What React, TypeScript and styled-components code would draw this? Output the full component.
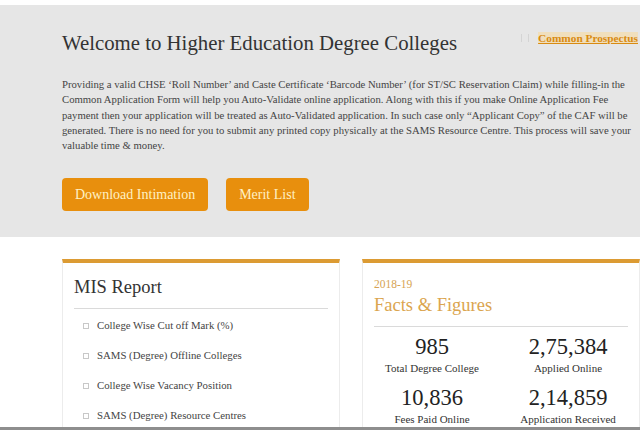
import React from 'react';
import styled, { createGlobalStyle } from 'styled-components';

const GlobalStyle = createGlobalStyle`
  html, body {
    margin: 0;
    padding: 0;
    background: #ffffff;
    overflow: hidden;
  }
  body {
    font-family: "Liberation Serif", "Times New Roman", serif;
    color: #333;
  }
`;

const Page = styled.div`
  width: 640px;
  height: 430px;
  padding-top: 5px;
  box-sizing: border-box;
  overflow: hidden;
`;

const Banner = styled.section`
  background: #e6e6e6;
  padding: 25px 0 26px 62px;
`;

const TitleRow = styled.div`
  display: flex;
  align-items: flex-start;
  justify-content: space-between;
`;

const Title = styled.h1`
  margin: 0;
  font-size: 20.8px;
  font-weight: normal;
  color: #333;
  line-height: 26px;
`;

const ProspectusLink = styled.a`
  display: flex;
  align-items: center;
  gap: 9px;
  margin-top: 2px;
  margin-right: 2px;
  font-size: 11.3px;
  font-weight: bold;
  color: #d98b12;
  text-decoration: underline;
  white-space: nowrap;
  span {
    background: #f0dfbd;
  }
`;

const DocGlyph = styled.i`
  display: inline-block;
  width: 6px;
  height: 8px;
  border-left: 1px solid #d4d4d4;
  border-right: 1px solid #d4d4d4;
`;

const Intro = styled.p`
  margin: 21px 0 0;
  width: 578px;
  font-size: 10.7px;
  line-height: 15.3px;
  color: #444;
`;

const Actions = styled.div`
  display: flex;
  gap: 18px;
  margin-top: 25px;
`;

const OrangeButton = styled.button`
  height: 33px;
  padding: 0 13px;
  border: none;
  border-radius: 4px;
  background: #e88f0d;
  color: #fff1c4;
  font-family: "Liberation Serif", "Times New Roman", serif;
  font-size: 14px;
  cursor: pointer;
`;

const Cards = styled.div`
  display: flex;
  gap: 22px;
  padding: 22px 0 0 62px;
`;

const Card = styled.div`
  width: 278px;
  flex-shrink: 0;
  box-sizing: border-box;
  border-top: 4px solid #dc9b33;
  border-left: 1px solid #ececec;
  border-right: 1px solid #ececec;
  padding: 0 11px;
  height: 200px;
`;

const CardTitle = styled.h2<{ $accent?: boolean }>`
  margin: ${(p) => (p.$accent ? '2px 0 0' : '12px 0 0')};
  font-size: 18.5px;
  font-weight: normal;
  line-height: 24px;
  color: ${(p) => (p.$accent ? '#dba54f' : '#333')};
`;

const Season = styled.div`
  margin-top: 14px;
  font-size: 11.5px;
  line-height: 14px;
  color: #d6a353;
`;

const Divider = styled.hr`
  margin: 9px 0 0;
  border: none;
  border-top: 1px solid #dadada;
`;

const ReportList = styled.ul`
  list-style: none;
  margin: 1px 0 0;
  padding: 0 0 0 9px;
`;

const ReportItem = styled.li`
  display: flex;
  align-items: center;
  gap: 8px;
  height: 30px;
  font-size: 10.8px;
  color: #444;
`;

const Bullet = styled.i`
  width: 4px;
  height: 4px;
  border: 1px solid #c8c8c8;
  margin-top: 1px;
`;

const StatGrid = styled.div`
  display: grid;
  grid-template-columns: 136px 136px;
  row-gap: 8px;
  margin: 7px 0 0 -10px;
`;

const Stat = styled.div`
  display: flex;
  flex-direction: column;
  align-items: center;
`;

const StatValue = styled.div`
  font-size: 22.5px;
  line-height: 26px;
  color: #222;
`;

const StatLabel = styled.div`
  font-size: 11px;
  line-height: 17px;
  color: #333;
`;

const TaskStrip = styled.div`
  position: fixed;
  left: 0;
  right: 0;
  bottom: 0;
  height: 3px;
  background: #8e8e8e;
`;

const reports = [
  'College Wise Cut off Mark (%)',
  'SAMS (Degree) Offline Colleges',
  'College Wise Vacancy Position',
  'SAMS (Degree) Resource Centres',
];

const stats = [
  { value: '985', label: 'Total Degree College' },
  { value: '2,75,384', label: 'Applied Online' },
  { value: '10,836', label: 'Fees Paid Online' },
  { value: '2,14,859', label: 'Application Received' },
];

export default function App() {
  return (
    <>
      <GlobalStyle />
      <Page>
        <Banner>
          <TitleRow>
            <Title>Welcome to Higher Education Degree Colleges</Title>
            <ProspectusLink href="#">
              <DocGlyph />
              <span>Common Prospectus</span>
            </ProspectusLink>
          </TitleRow>
          <Intro>
            Providing a valid CHSE ‘Roll Number’ and Caste Certificate ‘Barcode Number’ (for ST/SC Reservation
            Claim) while filling-in the Common Application Form will help you Auto-Validate online application.
            Along with this if you make Online Application Fee payment then your application will be treated as
            Auto-Validated application. In such case only “Applicant Copy” of the CAF will be generated. There is
            no need for you to submit any printed copy physically at the SAMS Resource Centre. This process will
            save your valuable time &amp; money.
          </Intro>
          <Actions>
            <OrangeButton>Download Intimation</OrangeButton>
            <OrangeButton>Merit List</OrangeButton>
          </Actions>
        </Banner>

        <Cards>
          <Card>
            <CardTitle>MIS Report</CardTitle>
            <Divider />
            <ReportList>
              {reports.map((r) => (
                <ReportItem key={r}>
                  <Bullet />
                  {r}
                </ReportItem>
              ))}
            </ReportList>
          </Card>
          <Card>
            <Season>2018-19</Season>
            <CardTitle $accent>Facts &amp; Figures</CardTitle>
            <Divider />
            <StatGrid>
              {stats.map((s) => (
                <Stat key={s.label}>
                  <StatValue>{s.value}</StatValue>
                  <StatLabel>{s.label}</StatLabel>
                </Stat>
              ))}
            </StatGrid>
          </Card>
        </Cards>
      </Page>
      <TaskStrip />
    </>
  );
}
